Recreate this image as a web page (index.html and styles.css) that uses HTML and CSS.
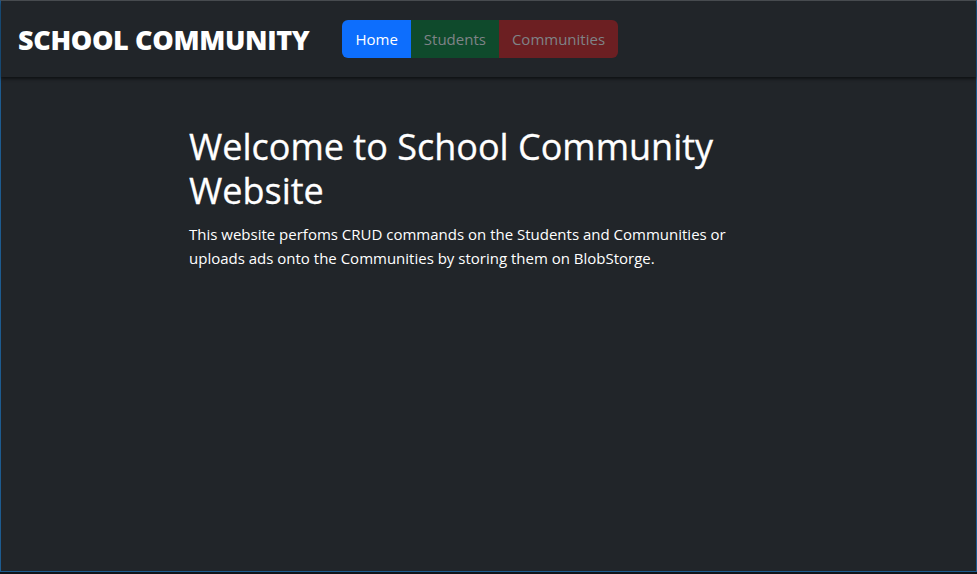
FILE: index.html
```html
<!DOCTYPE html>
<html lang="en">
<head>
<meta charset="utf-8">
<title>School Community</title>
<link rel="stylesheet" href="styles.css">
</head>
<body>
<div class="window">
  <header class="navbar">
    <a class="brand" href="#">SCHOOL COMMUNITY</a>
    <nav class="tabs">
      <a class="tab tab-home" href="#">Home</a>
      <a class="tab tab-students" href="#">Students</a>
      <a class="tab tab-communities" href="#">Communities</a>
    </nav>
  </header>
  <main class="content">
    <h1 class="title">Welcome to School Community Website</h1>
    <p class="lead">This website perfoms CRUD commands on the Students and Communities or uploads ads onto the Communities by storing them on BlobStorge.</p>
  </main>
</div>
<div class="below"></div>
</body>
</html>
```
FILE: styles.css
```css
html, body {
  margin: 0;
  padding: 0;
  height: 574px;
  overflow: hidden;
  background: #0d1117;
}
body {
  font-family: "Open Sans", "Noto Sans", sans-serif;
  color: #fff;
}
.window {
  box-sizing: border-box;
  height: 572px;
  background: #212529;
  border-left: 1px solid #1d5b8f;
  border-right: 1px solid #1d5b8f;
  border-bottom: 1px solid #1d5b8f;
  border-top: 1px solid #4a4e52;
  display: flex;
  flex-direction: column;
}
.below {
  height: 2px;
  background: #111418;
}
.navbar {
  height: 76px;
  display: flex;
  align-items: center;
  padding-left: 17px;
  background: #212529;
  box-shadow: 0 2px 3px rgba(0,0,0,0.55);
  position: relative;
  z-index: 1;
  flex-shrink: 0;
}
.brand {
  font-family: "Open Sans", sans-serif;
  font-weight: 800;
  font-size: 27px;
  color: #fff;
  text-decoration: none;
  letter-spacing: -0.35px;
  margin-right: 33px;
}
.tabs {
  display: flex;
  border-radius: 6px;
  overflow: hidden;
  height: 38px;
}
.tab {
  display: flex;
  align-items: center;
  padding: 0 13px;
  font-size: 15px;
  text-decoration: none;
  color: #7f8387;
}
.tab-home { background: #0d6efd; color: #fff; }
.tab-students { background: #0f4a2c; }
.tab-communities { background: #6c1f22; }
.content {
  padding-left: 188px;
  padding-top: 48px;
  width: 560px;
}
.title {
  font-size: 36px;
  font-weight: 500;
  line-height: 44px;
  margin: 0 0 9px 0;
  -webkit-text-stroke: 0.3px #fff;
}
.lead {
  font-size: 15px;
  line-height: 24px;
  margin: 0;
}
```
